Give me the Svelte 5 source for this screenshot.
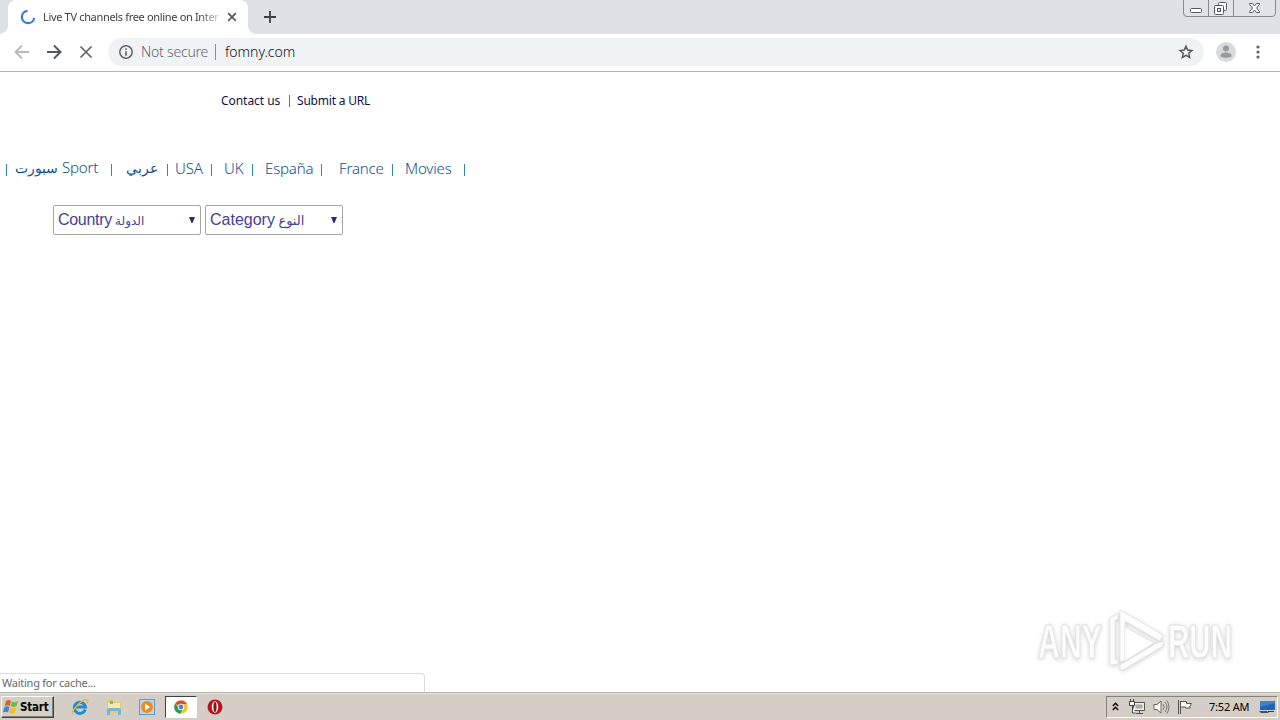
<script>
	const links = [
		{ arabic: 'سبورت', label: 'Sport' },
		{ arabic: 'عربي' },
		{ label: 'USA' },
		{ label: 'UK' },
		{ label: 'España' },
		{ label: 'France' },
		{ label: 'Movies' },
	];

	const filters = [
		{ name: 'country', label: 'Country', arabic: 'الدولة' },
		{ name: 'category', label: 'Category', arabic: 'النوع' },
	];

	let loading = true;
</script>

<div class="screen">
	<header>
		<div class="tabs">
			<div class="tab">
				<svg class="spinner" width="16" height="16" viewBox="0 0 16 16">
					<path d="M7.500 1.800A6.200 6.200 0 1 0 14.200 8.800" fill="none" stroke="#3c78d8" stroke-width="2.200" />
				</svg>
				<span class="title">Live TV channels free online on Inter</span>
				<svg class="close" width="10" height="10" viewBox="0 0 10 10">
					<path d="M1.200 1.200l7.600 7.600M8.800 1.200L1.200 8.800" stroke="#55585c" stroke-width="1.700" />
				</svg>
			</div>
			<svg class="plus" width="12" height="12" viewBox="0 0 12 12">
				<path d="M6 0v12M0 6h12" stroke="#3c4043" stroke-width="1.800" />
			</svg>
			<svg class="caption" width="94" height="18" viewBox="0 0 94 18">
				<path d="M.5 0v13q0 3.500 3.500 3.500h85q3.500 0 3.500-3.500V0" fill="#e0e3e8" stroke="#858a93" />
				<path d="M25.500 0v16M50.500 0v16" stroke="#858a93" />
				<rect x="7.500" y="8.500" width="11" height="4" rx="1" fill="#fff" stroke="#51565e" />
				<rect x="35.500" y="2.500" width="8" height="8" rx="1" fill="#fff" stroke="#51565e" />
				<rect x="31.500" y="5.500" width="9" height="9" rx="1" fill="#fff" stroke="#51565e" />
				<rect x="34.500" y="8.500" width="3" height="3" fill="#e3e6eb" stroke="#51565e" />
				<path d="M66.500 3.500h3l2 2.500 2-2.500h3v1L73.500 8l3 3.500v1h-3l-2-2.500-2 2.500h-3v-1l3-3.500-3-3.500z" fill="#fff" stroke="#51565e" />
			</svg>
		</div>
		<div class="toolbar">
			<svg class="back" width="16" height="16" viewBox="0 0 16 16">
				<path d="M15 8H2M8 1.500L1.500 8 8 14.500" fill="none" stroke="#b8babd" stroke-width="1.800" />
			</svg>
			<svg class="forward" width="16" height="16" viewBox="0 0 16 16">
				<path d="M1 8h13M8 1.500L14.500 8 8 14.500" fill="none" stroke="#55585c" stroke-width="2" />
			</svg>
			{#if loading}
				<svg class="stop" width="14" height="14" viewBox="0 0 14 14">
					<path d="M1.500 1.500l11 11M12.500 1.500l-11 11" stroke="#5f6368" stroke-width="1.700" />
				</svg>
			{/if}
			<div class="address">
				<svg width="14" height="14" viewBox="0 0 14 14">
					<circle cx="7" cy="7" r="6.200" fill="none" stroke="#5f6368" stroke-width="1.500" />
					<path d="M7 3.200v1.600M7 6.200v4.600" stroke="#5f6368" stroke-width="1.600" />
				</svg>
				<span class="secure">Not secure</span>
				<i></i>
				<span class="host">fomny.com</span>
				<svg class="star" width="16" height="16" viewBox="0 0 16 16">
					<path d="M8 2.200l1.700 3.900 4.200.4-3.150 2.800.9 4.100L8 11.250 4.350 13.400l.9-4.100L2.100 6.500l4.200-.4z" fill="none" stroke="#55595e" stroke-width="1.500" />
				</svg>
			</div>
			<svg class="avatar" width="20" height="20" viewBox="0 0 20 20">
				<circle cx="10" cy="10" r="10" fill="#d9dadb" />
				<circle cx="10" cy="6.500" r="3" fill="#97999c" />
				<path d="M4.500 14.500v-1c0-2 3-3 5.500-3s5.500 1 5.500 3v1q-5.500 2.500-11 0z" fill="#97999c" />
			</svg>
			<svg class="dots" width="4" height="14" viewBox="0 0 4 14">
				<circle cx="2" cy="2" r="1.600" fill="#5f6368" />
				<circle cx="2" cy="7" r="1.600" fill="#5f6368" />
				<circle cx="2" cy="12" r="1.600" fill="#5f6368" />
			</svg>
		</div>
	</header>

	<main>
		<div class="contact">
			<a href="#contact">Contact us</a>
			<b></b>
			<a class="submit" href="#submit">Submit a URL</a>
		</div>
		<nav>
			<b></b>
			{#each links as { arabic, label }}
				<a href="#{label ?? arabic}">
					{#if arabic}<bdi>{arabic}</bdi>{/if}
					{label ?? ''}
				</a>
				<b></b>
			{/each}
		</nav>
		<div class="filters">
			{#each filters as { name, label, arabic }}
				<button class={name}>
					<span>{label} <bdi>{arabic}</bdi></span>
					<svg width="6" height="6" viewBox="0 0 6 6"><path d="M0 0h6L3.500 6h-1z" fill="#302878" /></svg>
				</button>
			{/each}
		</div>

		<div class="watermark">
			<svg width="210" height="76" viewBox="0 0 210 76">
				<text x="8" y="58" textLength="64" lengthAdjust="spacingAndGlyphs">ANY</text>
				<text x="138" y="58" textLength="64" lengthAdjust="spacingAndGlyphs">RUN</text>
				<path d="M80 18l8-4v5l-3 1v40l3-1v5l-8 1z" />
				<path d="M90 10l43 25-3 6-35-20v40h-5z" />
				<path d="M90 65l35-21 8-3v5L93 70l-3-1z" />
				<path d="M95 27l29 16-29 18z" fill="#fff" />
			</svg>
		</div>
		{#if loading}
			<div class="status">Waiting for cache...</div>
		{/if}
	</main>

	<footer>
		<div class="start">
			<svg width="18" height="16" viewBox="0 0 18 16">
				<path d="M4 2q3-2 5 0L7.800 7q-2-1.500-5 0z" fill="#ea5b25" />
				<path d="M10 2.500q3 1.500 6-.5l-1.500 5q-3 1.800-5.800 0z" fill="#75b83b" />
				<path d="M2.500 8q3-1.500 5 0L6 13.500q-2-1.500-5.200 0z" fill="#388ad0" />
				<path d="M8.500 8.500q3 1.500 5.800 0l-1.500 5q-3 1.800-5.600 0z" fill="#f5bd25" />
			</svg>
			<span>Start</span>
		</div>
		<div class="launch">
			<svg width="18" height="18" viewBox="0 0 18 18">
				<path d="M14.300 11.500A5.600 5.600 0 1 1 14.500 9H5" fill="none" stroke="#238bd0" stroke-width="3" />
				<path d="M2 16C-1 13 13-1 16.500 2.200c.8.800.3 2-.5 3" fill="none" stroke="#e2b83f" stroke-width="1.400" />
			</svg>
			<svg width="18" height="18" viewBox="0 0 18 18">
				<path d="M2 2h5l1 2h8v11H2z" fill="#e9ca67" />
				<path d="M3 5h12v8H3z" fill="#f8eaa9" />
				<path d="M5 3h3v3H5z" fill="#78b878" />
				<path d="M2 17v-5q0-2 2-2h10q2 0 2 2v5h-3v-4H5v4z" fill="#72b8db" />
			</svg>
			<svg width="18" height="18" viewBox="0 0 18 18">
				<rect x="1.500" y="1.500" width="15" height="15" fill="#b9d8ef" stroke="#5b9bd0" />
				<circle cx="9" cy="9" r="6" fill="#f08b20" />
				<path d="M7 5.500l5 3.500-5 3.500z" fill="#fff" />
			</svg>
			<div class="running">
				<svg width="14" height="14" viewBox="0 0 14 14">
					<circle cx="7" cy="7" r="6.800" fill="#f4c32f" />
					<path d="M7 7L1.200 3.500A6.800 6.800 0 0 1 12.900 4H7z" fill="#dd4b3e" />
					<path d="M1.200 3.500A6.800 6.800 0 0 0 6.200 13.700L9 9 4.500 8z" fill="#279b57" />
					<circle cx="7" cy="7" r="3.200" fill="#fff" />
					<circle cx="7" cy="7" r="2.400" fill="#4285d8" />
				</svg>
			</div>
			<svg width="16" height="16" viewBox="0 0 16 16">
				<circle cx="8" cy="8" r="7.500" fill="#b4161b" />
				<ellipse cx="8" cy="8" rx="3.200" ry="5.800" fill="#fff" />
				<ellipse cx="8" cy="8" rx="1.600" ry="5" fill="#8c1016" />
			</svg>
		</div>
		<div class="tray">
			<svg class="chevrons" width="7" height="9" viewBox="0 0 7 9">
				<path d="M.8 4L3.500 1.300 6.200 4M.8 8l2.700-2.700L6.200 8" fill="none" stroke="#000" stroke-width="1.400" />
			</svg>
			<svg class="network" width="16" height="16" viewBox="0 0 16 16">
				<path d="M4.500 3.500h11v8h-11zM7 14.500h7M10.500 12v2" fill="#eee" stroke="#555" />
				<path d="M6.500 5.500h7v4h-7z" fill="#aaa" />
				<path d="M1.500 0v3M4.500 0v3M.5 2.500h5v4h-5zM3.500 7v7h3" fill="#fff" stroke="#444" />
			</svg>
			<svg class="volume" width="17" height="16" viewBox="0 0 17 16">
				<path d="M1 5.500h3L8 2v12l-4-3.500H1z" fill="#fff" stroke="#666" />
				<path d="M10 5q2.500 3 0 6M12 3q4 5 0 10M14 1.500q4 6.500 0 13" fill="none" stroke="#777" />
			</svg>
			<svg class="flag" width="16" height="16" viewBox="0 0 16 16">
				<path d="M1.500 1v14M3.500 2v13M3.500 2.500h6v2h5l-2 3.500 1 1h-5V8h-5" fill="#fff" stroke="#555" />
			</svg>
			<time>7:52 AM</time>
			<svg class="desktop" width="16" height="14" viewBox="0 0 16 14">
				<path d="M1 1h15v9H1z" fill="#2464b2" />
				<path d="M1 1h15v2L1 7z" fill="#3e83cb" />
				<path d="M0 11h8l2 2H2z" fill="#354e78" />
				<path d="M9 11h6v1H9z" fill="#253b60" />
			</svg>
		</div>
	</footer>
</div>

<style>
	:global(body) {
		background: #fff;
	}
	.screen {
		width: 1280px;
		height: 720px;
		display: flex;
		flex-direction: column;
		overflow: hidden;
		font-family: "Noto Sans", "DejaVu Sans", sans-serif;
	}
	svg {
		flex: none;
		display: block;
	}
	a {
		text-decoration: none;
		white-space: nowrap;
	}
	.tabs {
		height: 34px;
		background: #dee1e6;
		display: flex;
		align-items: center;
		padding-left: 8px;
	}
	.tab {
		box-sizing: border-box;
		width: 240px;
		height: 34px;
		display: flex;
		align-items: center;
		padding: 0 11px 0 12px;
		border-radius: 8px 8px 0 0;
		background: #fff;
		position: relative;
	}
	.tab::before,
	.tab::after {
		content: "";
		position: absolute;
		bottom: 0;
		width: 8px;
		height: 8px;
	}
	.tab::before {
		left: -8px;
		background: radial-gradient(circle at 0 0, #dee1e6 7.5px, #fff 8px);
	}
	.tab::after {
		right: -8px;
		background: radial-gradient(circle at 100% 0, #dee1e6 7.5px, #fff 8px);
	}
	.title {
		width: 177px;
		margin-left: 7px;
		white-space: nowrap;
		font-size: 11px;
		line-height: 16px;
		letter-spacing: -0.33px;
		color: #3c4043;
		mask-image: linear-gradient(to right, #000 156px, transparent 182px);
	}
	.close {
		margin-left: auto;
	}
	.plus {
		margin-left: 16px;
	}
	.caption {
		align-self: flex-start;
		margin: 0 3px 0 auto;
	}
	.toolbar {
		box-sizing: border-box;
		height: 38px;
		display: flex;
		align-items: center;
		padding: 0 20px 1px 14px;
		border-bottom: 1px solid #b4b5b2;
	}
	.forward {
		margin-left: 16px;
	}
	.stop {
		margin: 0 15px 0 17px;
	}
	.address {
		box-sizing: border-box;
		flex: none;
		width: 1096px;
		height: 28px;
		display: flex;
		align-items: center;
		padding: 0 10px 0 11px;
		border-radius: 14px;
		background: #f0f3f5;
		font-size: 14px;
		font-weight: 300;
	}
	.address span {
		padding-bottom: 2px;
	}
	.secure {
		width: 67px;
		margin-left: 8px;
		color: #5f6368;
		letter-spacing: -0.2px;
		white-space: nowrap;
	}
	.address i {
		width: 1px;
		height: 16px;
		margin: 0 9px 0 7px;
		background: #888c91;
	}
	.host {
		color: #101114;
	}
	.star {
		margin-left: auto;
	}
	.avatar {
		margin-left: 12px;
	}
	.dots {
		margin-left: auto;
	}
	main {
		flex: 1;
		position: relative;
	}
	b {
		width: 1px;
		height: 12px;
		background: #3189b3;
	}
	.contact {
		display: flex;
		align-items: center;
		padding: 20px 0 0 221px;
		font-size: 12px;
		line-height: 18px;
		letter-spacing: -0.05px;
	}
	.contact a {
		width: 68px;
		color: #10104c;
	}
	.contact .submit {
		margin-left: 7px;
		letter-spacing: -0.2px;
	}
	nav {
		display: grid;
		grid-template-columns: 9px 96px 15px 41px 8px 36px 13px 28px 13px 56px 18px 53px 13px 59px 1px;
		align-items: center;
		height: 22px;
		margin: 47px 0 0 6px;
		font-size: 15px;
		line-height: 20px;
		font-weight: 300;
		letter-spacing: -0.15px;
	}
	nav b {
		margin-top: 3px;
	}
	nav a {
		padding-bottom: 1px;
		color: #0f4f90;
	}
	nav bdi {
		font-size: 14px;
		letter-spacing: 0;
	}
	.filters {
		display: flex;
		gap: 4px;
		margin: 26px 0 0 53px;
	}
	button {
		height: 30px;
		display: flex;
		align-items: center;
		justify-content: space-between;
		padding: 0 5px 0 4px;
		border: 1px solid #a4a4a4;
		border-radius: 2px;
		background: #fff;
		color: #463f96;
		font: 16px "Liberation Sans", "DejaVu Sans", sans-serif;
		white-space: nowrap;
	}
	.country {
		width: 148px;
		letter-spacing: -0.3px;
	}
	.category {
		width: 138px;
	}
	button bdi {
		margin-left: -1px;
		font-family: "DejaVu Sans", sans-serif;
		font-size: 13px;
		letter-spacing: 0;
	}
	.country bdi {
		font-size: 12px;
	}
	.watermark {
		position: absolute;
		right: 40px;
		bottom: 16px;
	}
	.watermark svg {
		fill: #fdfdfd;
		stroke: #e4e4e4;
		stroke-width: 0.8;
		filter: drop-shadow(0 1px 2px #ccc);
	}
	.watermark text {
		font: bold 49px "Liberation Sans", sans-serif;
	}
	.status {
		box-sizing: border-box;
		position: absolute;
		left: 0;
		bottom: 0;
		width: 425px;
		height: 19px;
		padding-left: 2px;
		border: 1px solid #dcdcdc;
		border-width: 1px 1px 0 0;
		border-radius: 0 4px 0 0;
		color: #66696c;
		font-size: 11px;
		line-height: 18px;
		letter-spacing: -0.25px;
	}
	footer {
		box-sizing: border-box;
		height: 28px;
		display: flex;
		align-items: center;
		padding: 1px 2px 1px 1px;
		border-top: 1px solid #b5b2ab;
		background: #d5cec6;
		box-shadow: inset 0 1px #e8e4de;
	}
	.start {
		box-sizing: border-box;
		width: 53px;
		height: 22px;
		display: flex;
		align-items: center;
		border: 1px solid;
		border-color: #fff #404040 #404040 #fff;
		box-shadow: inset -1px -1px #85827d;
		font: bold 11.5px "DejaVu Sans Condensed", "DejaVu Sans", sans-serif;
		letter-spacing: -0.2px;
	}
	.launch {
		display: flex;
		align-items: center;
		margin-left: 17px;
		gap: 15.5px;
	}
	.running {
		box-sizing: border-box;
		width: 32px;
		height: 22px;
		display: flex;
		align-items: center;
		justify-content: center;
		margin: 0 -6px 0 -6.5px;
		border: 1px solid;
		border-color: #404040 #fff #fff #404040;
		background: #fff;
	}
	.tray {
		box-sizing: border-box;
		width: 172px;
		height: 22px;
		display: flex;
		align-items: center;
		margin-left: auto;
		padding: 0 2px 0 5px;
		border: 1px solid;
		border-color: #85827d #fff #fff #85827d;
	}
	.network {
		margin-left: 10px;
	}
	.volume {
		margin-left: 8px;
	}
	.flag {
		margin-left: 7px;
	}
	time {
		margin-left: 16px;
		white-space: nowrap;
		font-size: 11px;
		letter-spacing: -0.2px;
	}
	.desktop {
		margin-left: auto;
	}
</style>
